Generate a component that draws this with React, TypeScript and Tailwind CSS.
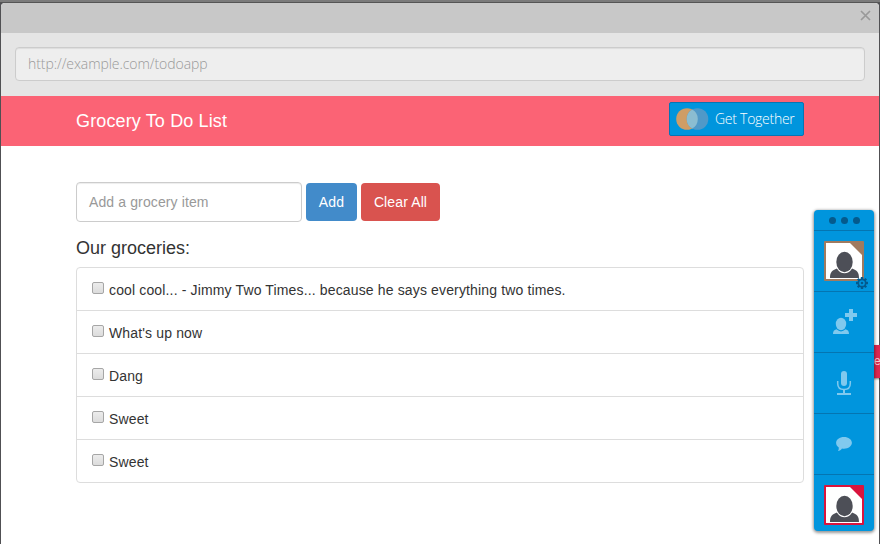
import React from "react";

const groceries = [
  "cool cool... - Jimmy Two Times... because he says everything two times.",
  "What's up now",
  "Dang",
  "Sweet",
  "Sweet",
];

function Avatar({ color }: { color: string }) {
  return (
    <svg width="40" height="40" viewBox="0 0 40 40" className="block">
      <rect width="40" height="40" rx="1" fill={color} />
      <rect x="2" y="2" width="36" height="36" fill="#fff" />
      <path d="M6 37 C6 31 8 29.500 13 27.500 Q20.500 36 28 27.500 C33 29.500 35 31 35 37Z" fill="#4d4f57" />
      <ellipse cx="20.500" cy="21" rx="9.200" ry="11.300" fill="#fff" />
      <ellipse cx="20.500" cy="21" rx="8.200" ry="10.200" fill="#4d4f57" />
      <path d="M26 2 H38 V14Z" fill={color} />
    </svg>
  );
}

function Gear() {
  return (
    <svg width="12" height="12" viewBox="-6 -6 12 12" className="absolute left-[42px] top-[46px]">
      {[0, 45, 90, 135].map((a) => (
        <rect key={a} x="-1.2" y="-6" width="2.4" height="12" fill="#045a8d" transform={`rotate(${a})`} />
      ))}
      <circle r="3.700" fill="#0095dd" stroke="#045a8d" strokeWidth="1.700" />
      <circle r="1.300" fill="#045a8d" />
    </svg>
  );
}

function Sidebar() {
  const cell = "relative flex h-[61px] border-t border-[#0475b1]";
  return (
    <aside className="absolute left-[814px] top-[210px] h-[321px] w-[60px] rounded-[4px] bg-[#0095dd] shadow-[0_1px_3px_1px_rgba(0,0,0,0.4)]">
      <div className="flex h-[20px] items-center justify-center gap-[5px] pl-[1px] pt-[1px]">
        {[0, 1, 2].map((i) => (
          <span key={i} className="size-[7px] rounded-full bg-[#045a8d]" />
        ))}
      </div>
      <div className={`${cell} pl-[10px] pt-[10px]`}>
        <Avatar color="#a07a5f" />
        <Gear />
      </div>
      <div className={`${cell} pl-[19px] pt-[17px]`}>
        <svg width="26" height="26" viewBox="0 0 26 26" fill="#80c9ee">
          <path d="M16 0h4v4h4v4h-4v4h-4V8h-4V4h4z" />
          <ellipse cx="8" cy="15" rx="5.200" ry="6.200" />
          <path d="M0 25c0-2.700 1-4 3.500-4.700q4.500 4.200 9 0c2.500.7 3.500 2 3.500 4.700z" />
        </svg>
      </div>
      <div className={`${cell} pl-[22px] pt-[18px]`}>
        <svg width="16" height="26" viewBox="0 0 16 26" fill="none" stroke="#80c9ee">
          <rect x="5" y="0" width="6" height="15" rx="3" fill="#80c9ee" stroke="none" />
          <path d="M1.700 10v2.500c0 4 2.800 6 6.300 6s6.300-2 6.300-6V10" strokeWidth="1.500" />
          <path d="M8 18v5M1 23h14" strokeWidth="2" />
        </svg>
      </div>
      <div className={`${cell} pl-[22px] pt-[23px]`}>
        <svg width="16" height="15" viewBox="0 0 16 15" fill="#80c9ee">
          <path d="M8 0c4.400 0 7.900 2.600 7.900 5.800s-3.500 5.900-7.900 5.900c-.7 0-1.400-.1-2-.2C5 13 3.700 13.800 2 14c.6-.9.9-2 .8-3.400C1.100 9.500.1 7.800.1 5.800.1 2.600 3.600 0 8 0z" />
        </svg>
      </div>
      <div className="flex border-t border-[#0475b1] pl-[10px] pt-[10px]">
        <Avatar color="#d9143d" />
      </div>
    </aside>
  );
}

export default function App() {
  return (
    <div className="relative h-[544px] w-[880px] overflow-hidden bg-[#505053] px-px font-['Liberation_Sans',Arial,sans-serif] text-[#333]">
      <div className="-mx-px h-[3px] border-b border-[#555] bg-[#7b7b7b]" />
      <main className="h-[541px] overflow-hidden rounded-t-[4px] bg-white">
        <div className="flex h-[30px] justify-end bg-[#c8c8c8] pr-[8px] pt-[7px]">
          <svg width="11" height="11" viewBox="0 0 11 11" stroke="#999" strokeWidth="1.700">
            <path d="M1 1l9 9M10 1L1 10" />
          </svg>
        </div>
        <div className="h-[63px] bg-[#e5e5e5] px-[14px] pt-[14px]">
          <div className="flex h-[34px] items-center rounded-[4px] border border-[#ccc] bg-[#eee] px-[12px] pb-[2px] font-['Open_Sans',sans-serif] text-[14px] font-light tracking-[-0.07px] text-[#999] shadow-[inset_0_1px_1px_rgba(0,0,0,0.075)]">
            http://example.com/todoapp
          </div>
        </div>
        <header className="flex h-[50px] items-start justify-between bg-[#fb6375] px-[75px]">
          <h1 className="pt-[15px] text-[18px] leading-[20px] tracking-[0.13px] text-white">Grocery To Do List</h1>
          <button className="mt-[6px] flex h-[34px] w-[135px] items-center rounded-[2px] border border-[#0675b4] bg-[#0095dd] pl-[6px] font-['Open_Sans',sans-serif] text-[14px] font-light tracking-[-0.27px] text-white">
            <svg width="33" height="22" viewBox="0 0 33 22" className="mr-[6px] shrink-0">
              <circle cx="11" cy="11" r="10.800" fill="#cf9d66" />
              <circle cx="21.500" cy="11" r="10.800" fill="#5099c8" />
              <path d="M16.250 1.560a10.800 10.800 0 0 1 0 18.880a10.800 10.800 0 0 1 0-18.880z" fill="#8bbdd1" />
            </svg>
            <span className="whitespace-nowrap pb-[1px]">Get Together</span>
          </button>
        </header>
        <section className="px-[75px] pt-[36px]">
          <div className="flex h-[40px] items-center gap-[4px] text-[14px] tracking-[0.12px]">
            <div className="flex h-[40px] w-[226px] items-center rounded-[4px] border border-[#ccc] px-[12px] text-[#999] shadow-[inset_0_1px_1px_rgba(0,0,0,0.075)]">
              Add a grocery item
            </div>
            <button className="h-[38px] w-[51px] rounded-[4px] bg-[#428bca] text-white">Add</button>
            <button className="h-[38px] w-[79px] rounded-[4px] bg-[#d9534f] text-white">Clear All</button>
          </div>
          <h2 className="mt-[16px] text-[18px] leading-[20px]">Our groceries:</h2>
          <ul className="mt-[9px] divide-y divide-[#ddd] rounded-[4px] border border-[#ddd] text-[14px] tracking-[0.145px]">
            {groceries.map((item, i) => (
              <li key={i} className="flex h-[43px] items-start pl-[15px] pt-[13px] leading-[18px] last:h-[42px]">
                <span className="mr-[5px] mt-px size-[12px] shrink-0 rounded-[2px] border border-[#a6a6a6] bg-linear-to-b from-[#ececec] to-[#dcdcdc]" />
                <span className="whitespace-nowrap">{item}</span>
              </li>
            ))}
          </ul>
        </section>
      </main>
      <div className="absolute left-[872px] top-[345px] h-[33px] w-[10px] bg-[#dd2750] pl-[2px] text-[12px] leading-[33px] text-[#f6cbd5] shadow-[0_1px_2px_rgba(0,0,0,0.5)]">e</div>
      <Sidebar />
    </div>
  );
}
